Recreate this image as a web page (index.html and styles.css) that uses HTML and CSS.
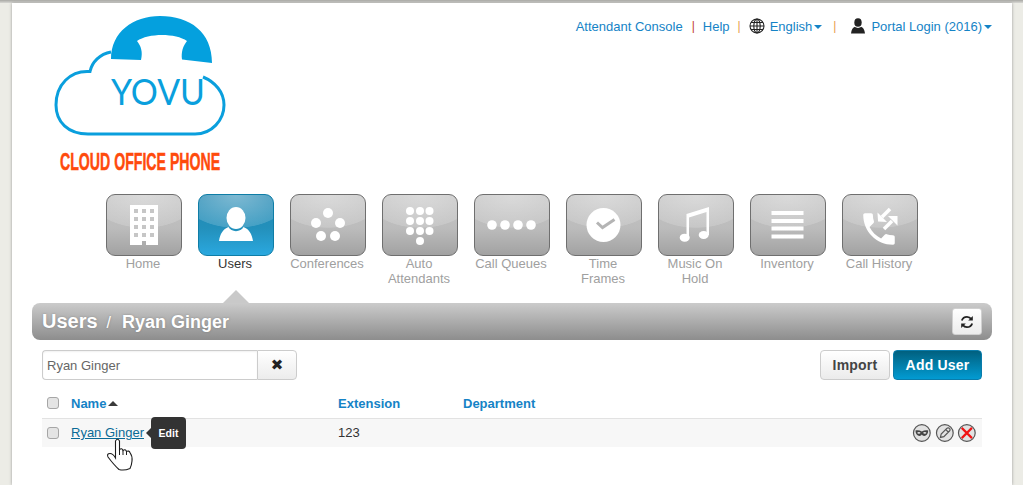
FILE: index.html
```html
<!DOCTYPE html>
<html lang="en">
<head>
<meta charset="utf-8">
<title>Users / Ryan Ginger</title>
<link rel="stylesheet" href="styles.css">
</head>
<body>
<div class="topshade"></div>
<div class="page">
  <header class="header">
    <svg class="logo" width="170" height="160" viewBox="55 15 170 160">
      <path class="cloud" d="M111 52C100 54 92 62 90 71.500C70 70 56 85 56 105C56 122 68 134 88 134L195 134C212 134 224 120 224 105C224 92 215 82 203 77"/>
      <path class="handset" d="M111 59C111 32 133 16 160 16C190 16 212 32 212 63L182 59.500C181 52 183 46 187 41C176 33 148 33 137 41C141 46 143 52 141 60Z"/>
      <text class="logo-name" x="111" y="105" textLength="94" lengthAdjust="spacingAndGlyphs">YOVU</text>
      <text class="logo-tag" transform="translate(60 170) scale(.6 1)" textLength="267" lengthAdjust="spacingAndGlyphs">CLOUD OFFICE PHONE</text>
    </svg>
    <nav class="toplinks">
      <a class="toplink">Attendant Console</a>
      <span class="sep sep-red">|</span>
      <a class="toplink">Help</a>
      <span class="sep sep-orange sep-tight">|</span>
      <svg class="ticon" width="16" height="16" viewBox="0 0 16 16">
        <g class="globe"><circle cx="8" cy="8" r="7"/><ellipse cx="8" cy="8" rx="3.200" ry="7"/><path d="M8 1V15M1 8H15M2 4.500H14M2 11.500H14"/></g>
      </svg>
      <a class="toplink with-caret">English<i class="caret"></i></a>
      <span class="sep sep-orange sep-wide">|</span>
      <svg class="ticon" width="16" height="16" viewBox="0 0 16 16">
        <ellipse cx="8" cy="4.500" rx="3.700" ry="4.300" fill="#222"/>
        <path d="M1 15.500C1.500 11.500 3 9.500 5 8.800C6 10.300 10 10.300 11 8.800C13 9.500 14.500 11.500 15 15.500Z" fill="#222"/>
      </svg>
      <a class="toplink with-caret">Portal Login (2016)<i class="caret"></i></a>
    </nav>
  </header>

  <nav class="tiles">
    <a class="tile">
      <span class="tile-btn">
        <svg width="74" height="60" viewBox="1 1 74 60">
          <path class="w" d="M24 11H52V51H40V47H36V51H24Z"/>
          <g class="hole">
            <rect x="28" y="15" width="4" height="4"/><rect x="36" y="15" width="4" height="4"/><rect x="44" y="15" width="4" height="4"/>
            <rect x="28" y="23" width="4" height="4"/><rect x="36" y="23" width="4" height="4"/><rect x="44" y="23" width="4" height="4"/>
            <rect x="28" y="31" width="4" height="4"/><rect x="36" y="31" width="4" height="4"/><rect x="44" y="31" width="4" height="4"/>
            <rect x="28" y="39" width="4" height="4"/><rect x="36" y="39" width="4" height="4"/><rect x="44" y="39" width="4" height="4"/>
          </g>
        </svg>
      </span>
      <span class="tile-label">Home</span>
    </a>
    <a class="tile tile-active">
      <span class="tile-btn">
        <svg width="74" height="60" viewBox="1 1 74 60">
          <ellipse class="w" cx="38" cy="24" rx="9.500" ry="11"/>
          <path class="w" d="M21 47C22 40 25 35 30.500 33C33 38.500 43 38.500 45.500 33C51 35 54 40 55 47Z"/>
        </svg>
      </span>
      <span class="tile-label">Users</span>
    </a>
    <a class="tile">
      <span class="tile-btn">
        <svg width="74" height="60" viewBox="1 1 74 60">
          <g class="w"><circle cx="38" cy="19" r="5"/><circle cx="26" cy="29" r="5"/><circle cx="50" cy="29" r="5"/><circle cx="31" cy="42" r="5"/><circle cx="45" cy="42" r="5"/></g>
        </svg>
      </span>
      <span class="tile-label">Conferences</span>
    </a>
    <a class="tile">
      <span class="tile-btn">
        <svg width="74" height="60" viewBox="1 1 74 60">
          <g class="w">
            <circle cx="28" cy="17" r="4"/><circle cx="38" cy="17" r="4"/><circle cx="47.500" cy="17" r="4"/>
            <circle cx="28" cy="27" r="4"/><circle cx="38" cy="27" r="4"/><circle cx="47.500" cy="27" r="4"/>
            <circle cx="28" cy="37" r="4"/><circle cx="38" cy="37" r="4"/><circle cx="47.500" cy="37" r="4"/>
            <circle cx="38" cy="47" r="4"/>
          </g>
        </svg>
      </span>
      <span class="tile-label">Auto Attendants</span>
    </a>
    <a class="tile">
      <span class="tile-btn">
        <svg width="74" height="60" viewBox="1 1 74 60">
          <g class="w"><circle cx="18" cy="31" r="4.800"/><circle cx="31" cy="31" r="4.800"/><circle cx="44" cy="31" r="4.800"/><circle cx="57" cy="31" r="4.800"/></g>
        </svg>
      </span>
      <span class="tile-label">Call Queues</span>
    </a>
    <a class="tile">
      <span class="tile-btn">
        <svg width="74" height="60" viewBox="1 1 74 60">
          <circle class="w" cx="37.500" cy="31" r="17"/>
          <path class="hand" d="M31 28.500L36.500 33.500L48.500 25.500"/>
        </svg>
      </span>
      <span class="tile-label">Time<br>Frames</span>
    </a>
    <a class="tile">
      <span class="tile-btn">
        <svg width="74" height="60" viewBox="1 1 74 60">
          <ellipse class="w" cx="26.700" cy="43.700" rx="5" ry="4"/>
          <ellipse class="w" cx="45.700" cy="41" rx="5" ry="4"/>
          <path class="w" d="M28.500 44V20L51 13V41H48.500V18L31 23.500V44Z"/>
        </svg>
      </span>
      <span class="tile-label">Music On Hold</span>
    </a>
    <a class="tile">
      <span class="tile-btn">
        <svg width="74" height="60" viewBox="1 1 74 60">
          <g class="w"><rect x="21.500" y="17" width="32" height="4"/><rect x="21.500" y="25" width="32" height="4"/><rect x="21.500" y="32.500" width="32" height="4"/><rect x="21.500" y="40.500" width="32" height="4"/></g>
        </svg>
      </span>
      <span class="tile-label">Inventory</span>
    </a>
    <a class="tile">
      <span class="tile-btn">
        <svg width="74" height="60" viewBox="1 1 74 60">
          <path class="w" transform="translate(16 14) scale(1.750)" d="M6.600 10.800c1.400 2.800 3.800 5.100 6.600 6.600l2.200-2.200c.3-.3.700-.4 1-.2 1.100.4 2.300.6 3.600.6.600 0 1 .4 1 1V20c0 .6-.4 1-1 1C10.600 21 3 13.400 3 4c0-.6.4-1 1-1h3.500c.6 0 1 .4 1 1 0 1.300.2 2.500.6 3.600.1.300 0 .7-.2 1l-2.300 2.200z"/>
          <path class="arrow" d="M48 15L40 23"/>
          <path class="w" d="M35.500 18.500L36 27.500L45 28Z"/>
          <path class="arrow" d="M42 35L50 27"/>
          <path class="w" d="M46 22L55.500 22L55.500 31.500Z"/>
        </svg>
      </span>
      <span class="tile-label">Call History</span>
    </a>
  </nav>

  <main class="panel">
    <div class="titlebar">
      <h1 class="crumb">Users<span class="crumb-sep">/</span><span class="crumb-sub">Ryan Ginger</span></h1>
      <button class="refresh" type="button" aria-label="Refresh">
        <svg width="14" height="14" viewBox="0 0 14 14">
          <path class="ref" d="M1.800 5.500C2.600 3.200 4.600 1.800 7 1.800C8.800 1.800 10.300 2.700 11.200 4"/>
          <path class="ref-head" d="M12.800 1V5.600H8.200Z"/>
          <path class="ref" d="M12.200 8.500C11.400 10.800 9.400 12.200 7 12.200C5.200 12.200 3.700 11.300 2.800 10"/>
          <path class="ref-head" d="M1.200 13V8.400H5.800Z"/>
        </svg>
      </button>
    </div>

    <div class="content">
      <div class="toolbar">
        <div class="search">
          <input class="search-input" type="text" value="Ryan Ginger">
          <button class="search-clear" type="button">&#10006;</button>
        </div>
        <div class="actions">
          <button class="btn btn-light" type="button">Import</button>
          <button class="btn btn-primary" type="button">Add User</button>
        </div>
      </div>

      <div class="grid grid-head">
        <span class="check"></span>
        <span class="col-name">Name<i class="sort"></i></span>
        <span>Extension</span>
        <span>Department</span>
        <span></span>
      </div>

      <div class="grid grid-row">
        <span class="check"></span>
        <a class="user-link">Ryan Ginger</a>
        <span>123</span>
        <span></span>
        <span class="row-actions">
          <svg class="ra" width="20" height="20" viewBox="0 0 20 20">
            <circle class="ra-bg" cx="10" cy="10" r="8.500"/>
            <path fill="#444" d="M3.500 7.500C6 7 8 7.500 10 8.500C12 7.500 14 7 16.500 7.500C16.500 11 14.500 13 12.500 13C11 13 10.500 12 10 11.500C9.500 12 9 13 7.500 13C5.500 13 3.500 11 3.500 7.500Z"/>
            <ellipse class="ra-eye" cx="7" cy="9.800" rx="1.600" ry=".9"/>
            <ellipse class="ra-eye" cx="13" cy="9.800" rx="1.600" ry=".9"/>
          </svg>
          <svg class="ra" width="20" height="20" viewBox="0 0 20 20">
            <circle class="ra-bg" cx="10" cy="10" r="8.500"/>
            <path class="ra-line" d="M5.500 14.500L6.300 11L12 5.300C12.800 4.500 14 4.500 14.700 5.300C15.500 6 15.500 7.200 14.700 8L9 13.700ZM11 6.500L13.500 9"/>
          </svg>
          <svg class="ra" width="20" height="20" viewBox="0 0 20 20">
            <circle class="ra-bg" cx="10" cy="10" r="8.500"/>
            <path class="ra-x" d="M4.800 4.800L15.200 15.200M15.200 4.800L4.800 15.200"/>
          </svg>
        </span>
        <div class="tooltip">Edit</div>
        <svg class="pointer" width="30" height="36" viewBox="105 436 30 36">
          <path class="pointer-shape" d="M115.500 455L115.500 441Q117.500 437.500 119.500 441L119.500 449.500Q122 447.500 123 450.500Q125.500 448.500 126.500 451.500Q129 450 130.200 453Q132.500 456 132 461Q131.500 466 130 468.500Q124 471 119 469.500Q114 465 108 457Q106.500 453.500 110 453.500Q113 453.500 115.500 458Z"/>
          <path class="pointer-line" d="M119.500 449.500V455M123 450.500V455M126.500 451.500V455"/>
        </svg>
      </div>
    </div>
  </main>
</div>
</body>
</html>
```

FILE: styles.css
```css
* { box-sizing: border-box; }
html, body { margin: 0; padding: 0; height: 100%; overflow: hidden; }
body {
  background: #ecece6;
  font-family: "Liberation Sans", Arial, sans-serif;
  font-size: 13px;
  color: #333;
}
.topshade {
  height: 3px;
  background: linear-gradient(#a8a8a4, #d8d8d4);
}
.page {
  width: 1000px;
  margin-left: 12px;
  min-height: 482px;
  background: #fff;
  box-shadow: 0 0 3px #9a9a9a;
  position: relative;
}

/* header */
.header {
  height: 191px;
  display: flex;
  justify-content: space-between;
  align-items: flex-start;
  padding: 12px 20px 0 43px;
}
.logo { display: block; overflow: visible; }
.cloud { fill: none; stroke: #0a9fdd; stroke-width: 3; }
.handset { fill: #04a0de; }
.logo-name { font-family: Lato, "Open Sans", sans-serif; font-size: 37px; font-weight: 400; fill: #0a9fdd; }
.logo-tag { font-family: "Liberation Sans", Arial, sans-serif; font-size: 23.500px; font-weight: 700; fill: #ff4a0c; stroke: #ff4a0c; stroke-width: .5; }

.toplinks {
  display: flex;
  align-items: center;
  height: 16px;
  margin-top: 3px;
  color: #1583c6;
  font-size: 13px;
}
.toplink { color: #1583c6; white-space: nowrap; display: flex; align-items: center; }
.sep { margin: 0 8px 0 9px; font-size: 12px; }
.sep-red { color: #c23a2a; }
.sep-orange { color: #e79c4c; }
.sep-tight { margin: 0 8px; }
.sep-wide { margin: 0 14px 0 11px; }
.ticon { display: block; margin-right: 5px; }
.globe { fill: none; stroke: #222; stroke-width: 1.100; }
.caret {
  display: inline-block;
  width: 0;
  height: 0;
  margin-left: 2px;
  margin-top: 1px;
  border-left: 4px solid transparent;
  border-right: 4px solid transparent;
  border-top: 4px solid #1583c6;
}

/* tile navigation */
.tiles {
  height: 109px;
  display: flex;
  gap: 16px;
  padding-left: 94px;
  align-items: flex-start;
}
.tile {
  width: 76px;
  display: block;
  text-align: center;
  position: relative;
  height: 109px;
}
.tile-btn {
  display: block;
  height: 62px;
  border: 1px solid #6f6f6f;
  border-radius: 9px;
  background:
    radial-gradient(ellipse 55px 33px at 50% 0, rgba(255,255,255,.38) 0, rgba(255,255,255,.16) 98%, rgba(255,255,255,0) 100%),
    linear-gradient(#c4c4c4, #bcbcbc 55%, #a2a2a2);
}
.tile-btn svg { display: block; }
.tile-label {
  display: block;
  margin: 0 1px 0 -1px;
  font-size: 13px;
  line-height: 15px;
  color: #a0a0a0;
}
.tile-active .tile-btn {
  border-color: #0f7da6;
  background:
    radial-gradient(ellipse 55px 33px at 50% 0, rgba(255,255,255,.42) 0, rgba(255,255,255,.16) 98%, rgba(255,255,255,0) 100%),
    linear-gradient(#2187b2, #2390bb 55%, #2aa8df);
}
.tile-active .tile-label { color: #333; }
.tile-active::after {
  content: "";
  position: absolute;
  left: 25px;
  bottom: 0;
  border-left: 13px solid transparent;
  border-right: 13px solid transparent;
  border-bottom: 13px solid #c9c9c9;
}
.w { fill: #fff; }
.hole { fill: #c6c6c6; }
.hand { fill: none; stroke: #b4b4b4; stroke-width: 3; }
.arrow { fill: none; stroke: #fff; stroke-width: 3.500; }

/* panel */
.panel { margin: 0 20px; }
.titlebar {
  height: 37px;
  display: flex;
  align-items: center;
  justify-content: space-between;
  padding: 0 10px;
  border-radius: 8px;
  background: linear-gradient(#cbcbcb, #8d8d8d);
}
.crumb {
  margin: 0;
  font-size: 20px;
  line-height: 37px;
  font-weight: 700;
  color: #fff;
  text-shadow: 0 0 2px rgba(90,90,90,.5);
  display: flex;
  align-items: baseline;
}
.crumb-sep { font-size: 16px; font-weight: 400; margin: 0 11px 0 9px; }
.crumb-sub { font-size: 18px; }
.refresh {
  width: 30px;
  height: 27px;
  padding: 0;
  display: flex;
  align-items: center;
  justify-content: center;
  border: 1px solid #d0d0d0;
  border-radius: 3px;
  background: linear-gradient(#fff, #ececec);
}
.ref { fill: none; stroke: #222; stroke-width: 1.800; }
.ref-head { fill: #222; }

.content { padding: 0 10px; }
.toolbar {
  display: flex;
  justify-content: space-between;
  padding-top: 10px;
}
.search { display: flex; height: 30px; }
.search-input {
  width: 215px;
  height: 30px;
  padding: 0 4px;
  border: 1px solid #ccc;
  border-right: 0;
  border-radius: 4px 0 0 4px;
  font-family: "Liberation Sans", Arial, sans-serif;
  font-size: 13px;
  color: #666;
  box-shadow: inset 0 1px 2px rgba(0,0,0,.06);
}
.search-clear {
  width: 40px;
  height: 30px;
  padding: 0;
  border: 1px solid #ccc;
  border-radius: 0 4px 4px 0;
  background: linear-gradient(#fff, #ececec);
  font-family: "DejaVu Sans", sans-serif;
  font-size: 15px;
  line-height: 28px;
  color: #222;
}
.actions { display: flex; gap: 3px; }
.btn {
  height: 30px;
  padding: 0;
  border-radius: 4px;
  font-family: "Liberation Sans", Arial, sans-serif;
  font-size: 14px;
  font-weight: 700;
  letter-spacing: .2px;
}
.btn-light {
  width: 70px;
  color: #444;
  border: 1px solid #ccc;
  background: linear-gradient(#fff, #ebebeb);
}
.btn-primary {
  width: 89px;
  color: #fff;
  border: 1px solid #0a7cab;
  background: linear-gradient(#01607f, #029bd2);
}

/* list */
.grid {
  display: grid;
  grid-template-columns: 29px 267px 125px 1fr 70px;
  position: relative;
}
.grid-head {
  height: 39px;
  padding-top: 8px;
  line-height: 15px;
  font-weight: 700;
  color: #1583c6;
  border-bottom: 1px solid #e2e2e2;
  align-items: center;
}
.grid-row {
  height: 28px;
  background: #f7f7f7;
  align-items: center;
  line-height: 28px;
  color: #333;
}
.check {
  width: 12px;
  height: 12px;
  margin-left: 5px;
  background: #e4e4e4;
  border: 1px solid #a6a6a6;
  border-radius: 3px;
}
.col-name { display: flex; align-items: center; }
.sort {
  margin-left: 2px;
  border-left: 5px solid transparent;
  border-right: 5px solid transparent;
  border-bottom: 5px solid #3a3a3a;
}
.user-link { color: #0a6a96; text-decoration: underline; justify-self: start; }
.row-actions { display: flex; justify-content: flex-end; gap: 3px; padding-right: 5px; }
.ra { display: block; }
.ra-bg { fill: #e2e2e2; stroke: #555; stroke-width: 1.200; }
.ra-line { fill: none; stroke: #555; stroke-width: 1.200; }
.ra-x { fill: none; stroke: #f01414; stroke-width: 2.200; }
.ra-eye { fill: #e2e2e2; }

.tooltip {
  position: absolute;
  left: 109px;
  top: -2px;
  width: 35px;
  height: 32px;
  border-radius: 4px;
  background: #333;
  color: #fff;
  font-size: 10.500px;
  font-weight: 700;
  line-height: 32px;
  text-align: center;
}
.tooltip::before {
  content: "";
  position: absolute;
  left: -5px;
  top: 11px;
  border-top: 5px solid transparent;
  border-bottom: 5px solid transparent;
  border-right: 5px solid #333;
}
.pointer { position: absolute; left: 63px; top: 17px; }
.pointer-shape { fill: #fff; stroke: #1c1c1c; stroke-width: 1.100; }
.pointer-line { fill: none; stroke: #1c1c1c; stroke-width: 1; }
```
